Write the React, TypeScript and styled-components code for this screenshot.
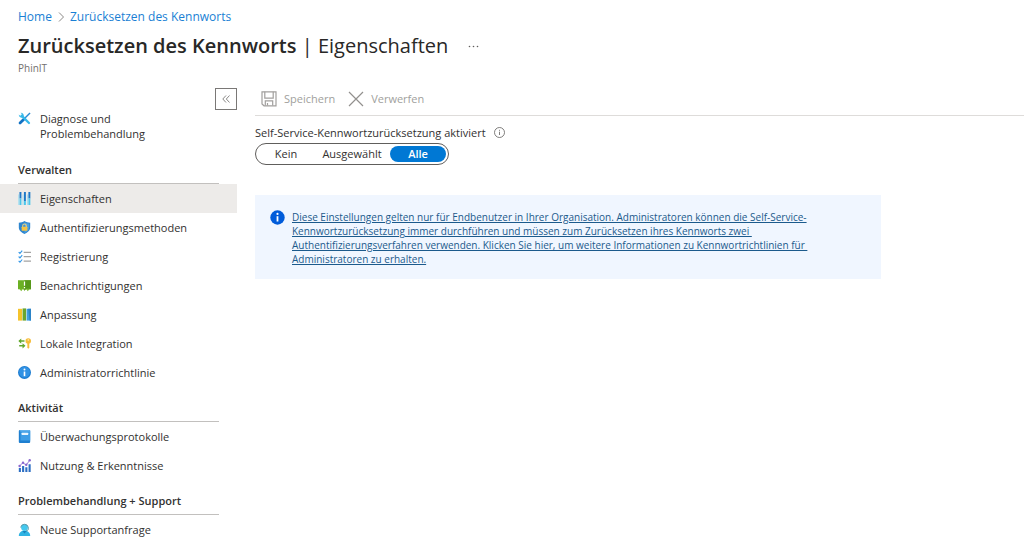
import React, { ReactNode, useState } from "react";
import styled, { createGlobalStyle } from "styled-components";

const GlobalStyle = createGlobalStyle`
  *, *::before, *::after { box-sizing: border-box; }
  body {
    margin: 0;
    background: #fff;
    color: #323130;
    font: 400 11px/15px "Open Sans", "Noto Sans", sans-serif;
  }
  ul { list-style: none; margin: 0; padding: 0; }
  button { font: inherit; background: none; border: 0; padding: 0; }
  svg { display: block; flex: none; }
`;

const Page = styled.div`
  min-height: 100vh;
  padding-top: 8px;
`;

const Header = styled.header`
  padding: 0 18px;
`;

const Breadcrumb = styled.nav`
  display: flex;
  align-items: center;
  gap: 5px;
  font-size: 12px;
  line-height: 17px;
`;

const CrumbLink = styled.a`
  color: #1a7fd4;
  text-decoration: none;
`;

const TitleRow = styled.div`
  display: flex;
  align-items: center;
  gap: 20px;
  margin-top: 7px;
`;

const Title = styled.h1`
  margin: 0;
  color: #292827;
  font-size: 20px;
  font-weight: 400;
  line-height: 28px;

  strong { font-weight: 600; }
`;

const MoreButton = styled.button`
  display: flex;
  padding: 4px 0;
`;

const Tenant = styled.div`
  margin-top: 1px;
  color: #72706e;
  font-size: 10px;
  line-height: 14px;
`;

const Columns = styled.div`
  display: flex;
  align-items: flex-start;
  padding-top: 13px;
`;

const Sidebar = styled.nav`
  flex: 0 0 237px;
`;

const SidebarTop = styled.div`
  display: flex;
  align-items: flex-start;
`;

const TopList = styled.ul`
  flex: 1;
  padding-top: 16px;
`;

const CollapseButton = styled.button`
  display: flex;
  align-items: center;
  justify-content: center;
  width: 22px;
  height: 22px;
  border: 1px solid #7a7876;
`;

const NavLink = styled.a<{ $active?: boolean }>`
  display: flex;
  gap: 9px;
  padding: 7px 0 7px 18px;
  background: ${(p) => (p.$active ? "#edebe9" : "transparent")};
  color: #323130;
  text-decoration: none;

  svg { margin-top: 1px; }
`;

const SectionTitle = styled.h2`
  margin: 0 18px 0 18px;
  padding: 13px 0 6px;
  border-bottom: 1px solid #c2c0be;
  font-size: 11px;
  font-weight: 600;
  line-height: 15px;

  ${SidebarTop} + & { padding-top: 14px; }
`;

const Main = styled.main`
  flex: 1;
  min-width: 0;
  padding-left: 18px;
`;

const Toolbar = styled.div`
  display: flex;
  gap: 13px;
  padding: 3px 6px 8px;
  border-bottom: 1px solid #dedcda;
`;

const ToolButton = styled.button`
  display: flex;
  align-items: center;
  gap: 7px;
  color: #a19f9d;
  line-height: 16px;
`;

const Field = styled.fieldset`
  margin: 0;
  padding: 9px 0 0;
  border: 0;
`;

const Legend = styled.legend`
  display: flex;
  align-items: center;
  gap: 8px;
  float: left;
  width: 100%;
  padding: 0;
  margin-bottom: 3px;
`;

const Segments = styled.div`
  display: inline-flex;
  clear: both;
  height: 22px;
  padding: 2px;
  border: 1px solid #605e5c;
  border-radius: 11px;
`;

const Segment = styled.label<{ $wide?: boolean }>`
  position: relative;
  display: flex;
  align-items: center;
  justify-content: center;
  width: ${(p) => (p.$wide ? "76px" : "56px")};
  border-radius: 8px;
  line-height: 14px;
  cursor: pointer;

  &:has(input:checked) {
    background: #0078d4;
    color: #fff;
    font-weight: 600;
  }
`;

const SegmentInput = styled.input`
  position: absolute;
  inset: 0;
  margin: 0;
  opacity: 0;
`;

const InfoBox = styled.section`
  display: flex;
  gap: 7px;
  max-width: 626px;
  margin-top: 30px;
  padding: 15px 16px 13px 15px;
  background: #f0f6ff;
`;

const InfoLink = styled.a`
  color: #1b5a8c;
  font-size: 10px;
  line-height: 14px;
  text-decoration: underline;
`;

const Icon = ({ children }: { children: ReactNode }) => (
  <svg width="13" height="13" viewBox="0 0 16 16" fill="none" aria-hidden="true">
    {children}
  </svg>
);

const ToolsIcon = () => (
  <Icon>
    <path d="M14.8 1.200 8 8" stroke="#2b8ad2" strokeWidth="1.800" />
    <path d="M7.500 8.500 2.500 13.500" stroke="#1272c4" strokeWidth="3.400" strokeLinecap="round" />
    <path d="m4.500 4.500 9 9" stroke="#35b8ea" strokeWidth="2.800" strokeLinecap="round" />
    <path d="M1 3.200 3 5.200 5.200 3 3.200 1A3.600 3.600 0 0 1 7 5.500L5.500 7A3.600 3.600 0 0 1 1 3.200Z" fill="#35b8ea" />
  </Icon>
);

const SlidersIcon = () => (
  <Icon>
    <path d="M3 0v8M8.500 0v11M14 0v8" stroke="#1f78c8" strokeWidth="2.400" />
    <path d="M3 8v8M8.500 11v5M14 8v8" stroke="#4cc6ea" strokeWidth="2.400" />
    <path d="M.8 3v13M6.200 3v13M11.700 3v13" stroke="#9bdcf2" strokeWidth="1" />
  </Icon>
);

const ShieldIcon = () => (
  <Icon>
    <path d="M8 0c2 1.500 4.500 2 7 2v6c0 4-4 6.500-7 8-3-1.500-7-4-7-8V2c2.500 0 5-.5 7-2Z" fill="#2f86cf" />
    <path d="M8 1.500C9.800 2.600 11.800 3 13.800 3.100V8c0 3.300-3.200 5.400-5.800 6.700Z" fill="#4ca0e0" />
    <path d="M5.800 7.500V6a2.200 2.200 0 0 1 4.400 0v1.500" stroke="#f3d67a" strokeWidth="1.300" />
    <rect x="4.500" y="7" width="7" height="5" rx=".6" fill="#f5c445" />
  </Icon>
);

const ChecklistIcon = () => (
  <Icon>
    <path d="m.8 2.500 1.600 1.600L5.200.8M.8 8l1.600 1.600 2.800-3.300M.8 13.400 2.400 15l2.800-3.300" stroke="#3a9be8" strokeWidth="1.400" />
    <path d="M7 2.800h9M7 8.200h9M7 13.600h9" stroke="#a3a3a3" strokeWidth="1.500" />
  </Icon>
);

const NoticeIcon = () => (
  <Icon>
    <path d="M0 1.500h16v11H9.500L8 14.500 6.500 12.500H0Z" fill="#6bb023" />
    <path d="M8 1.500h8v11H9.500L8 14.500Z" fill="#57981a" />
    <path d="M1.500 12h4.500L4 15Zm13 0h-4.500L12 15Z" fill="#7cbd30" />
    <path d="M8 3.200v5M8 9.700v1.800" stroke="#fff" strokeWidth="1.500" />
  </Icon>
);

const PaletteIcon = () => (
  <Icon>
    <path d="M0 1h5v14.500H0Z" fill="#f5c32c" />
    <path d="M5.600.5H10v15H5.600Z" fill="#6aa52f" />
    <path d="M10.600 1H16v14.500h-5.400Z" fill="#3f9fe0" />
    <path d="M12.500 1H16v14.500h-1.800Z" fill="#2b83c7" />
  </Icon>
);

const IntegrationIcon = () => (
  <Icon>
    <path d="M2 5h6M1.500 10.800H7" stroke="#62a82c" strokeWidth="1.800" />
    <path d="M4 1.800.4 5 4 8.200ZM5.600 7.600l3.600 3.200-3.600 3.200Z" fill="#62a82c" />
    <circle cx="12.600" cy="4.800" r="3.400" fill="#f6bd3a" />
    <path d="M11.500 7h2.400v6.200l-1.200 1.300-1.200-1.300Z" fill="#f6bd3a" />
    <circle cx="12.600" cy="3.700" r=".9" fill="#fff2c8" />
  </Icon>
);

const InfoIcon = () => (
  <Icon>
    <circle cx="8" cy="8" r="8" fill="#1c7cd0" />
    <circle cx="8" cy="7.500" r="6.700" fill="#3192e4" />
    <path d="M8 6.800V12.500" stroke="#fff" strokeWidth="2" />
    <circle cx="8" cy="4.300" r="1.200" fill="#fff" />
  </Icon>
);

const BookIcon = () => (
  <Icon>
    <rect x="1" y="0" width="14" height="16" rx="1.300" fill="#1f7fd0" />
    <path d="M3 0h11a1 1 0 0 1 1 1v12H3Z" fill="#3d9de6" />
    <rect x="4.500" y="3.500" width="8" height="2.800" rx=".5" fill="#e8f5ff" />
    <path d="M2 1h12.500" stroke="#7fc3f2" strokeWidth="1" />
  </Icon>
);

const InsightsIcon = () => (
  <Icon>
    <path d="M1 11h2.600v5H1ZM5 8.500h2.600V16H5ZM9 10h2.600v6H9ZM13 6.500h2.600V16H13Z" fill="#2d6fc4" />
    <path d="m2 8.500 4-4 4 3 4.500-6" stroke="#8a68cf" strokeWidth="1.100" />
    <circle cx="2" cy="8.500" r="1.500" fill="#8a68cf" />
    <circle cx="6.200" cy="4.600" r="1.500" fill="#8a68cf" />
    <circle cx="10.200" cy="7" r="1.500" fill="#8a68cf" />
    <circle cx="14.400" cy="1.600" r="1.500" fill="#8a68cf" />
  </Icon>
);

const SupportIcon = () => (
  <Icon>
    <path d="M1 16c0-4 2.500-6.500 7-6.500s7 2.500 7 6.500Z" fill="#2fb3e3" />
    <path d="m5.500 9.800 2.500 3 2.500-3Z" fill="#1a83bd" />
    <circle cx="8" cy="5.600" r="4.200" fill="#45c8ee" />
    <path d="M3.200 5.500a4.900 4.900 0 0 1 9.600 0v1.500c0 1.600-1 2.400-2.800 2.600" stroke="#4f8f9f" strokeWidth="1.100" />
  </Icon>
);

const SaveIcon = () => (
  <svg width="16" height="16" viewBox="0 0 16 16" fill="none" stroke="#a19f9d" strokeWidth="1.200" aria-hidden="true">
    <path d="M1 .8h14v14H3L1 13Z" />
    <path d="M3.800.8v6.400h8.400V.8M4.300 14.500v-4.700h7.400v4.700M6.500 12v2.500" />
  </svg>
);

const DiscardIcon = () => (
  <svg width="16" height="16" viewBox="0 0 16 16" fill="none" stroke="#92908e" strokeWidth="1.200" aria-hidden="true">
    <path d="m1 1 14 14M15 1 1 15" />
  </svg>
);

type Entry = { label: string; icon: ReactNode; active?: boolean };

const sections: { title: string; entries: Entry[] }[] = [
  {
    title: "Verwalten",
    entries: [
      { label: "Eigenschaften", icon: <SlidersIcon />, active: true },
      { label: "Authentifizierungsmethoden", icon: <ShieldIcon /> },
      { label: "Registrierung", icon: <ChecklistIcon /> },
      { label: "Benachrichtigungen", icon: <NoticeIcon /> },
      { label: "Anpassung", icon: <PaletteIcon /> },
      { label: "Lokale Integration", icon: <IntegrationIcon /> },
      { label: "Administratorrichtlinie", icon: <InfoIcon /> },
    ],
  },
  {
    title: "Aktivität",
    entries: [
      { label: "Überwachungsprotokolle", icon: <BookIcon /> },
      { label: "Nutzung & Erkenntnisse", icon: <InsightsIcon /> },
    ],
  },
  {
    title: "Problembehandlung + Support",
    entries: [{ label: "Neue Supportanfrage", icon: <SupportIcon /> }],
  },
];

const options = ["Kein", "Ausgewählt", "Alle"];

export default function App() {
  const [scope, setScope] = useState("Alle");

  return (
    <>
      <GlobalStyle />
      <Page>
        <Header>
          <Breadcrumb aria-label="Breadcrumb">
            <CrumbLink href="#home">Home</CrumbLink>
            <svg width="8" height="10" viewBox="0 0 8 10" fill="none" stroke="#8a8886" aria-hidden="true">
              <path d="m2 0.500 4.500 4.500L2 9.500" />
            </svg>
            <CrumbLink href="#reset">Zurücksetzen des Kennworts</CrumbLink>
          </Breadcrumb>
          <TitleRow>
            <Title>
              <strong>Zurücksetzen des Kennworts</strong> | Eigenschaften
            </Title>
            <MoreButton aria-label="Mehr">
              <svg width="11" height="3" viewBox="0 0 11 3" fill="#605e5c" aria-hidden="true">
                <circle cx="1.500" cy="1.500" r=".8" />
                <circle cx="5.500" cy="1.500" r=".8" />
                <circle cx="9.500" cy="1.500" r=".8" />
              </svg>
            </MoreButton>
          </TitleRow>
          <Tenant>PhinIT</Tenant>
        </Header>

        <Columns>
          <Sidebar aria-label="Menü">
            <SidebarTop>
              <TopList>
                <li>
                  <NavLink href="#diagnose">
                    <ToolsIcon />
                    <span>
                      Diagnose und
                      <br />
                      Problembehandlung
                    </span>
                  </NavLink>
                </li>
              </TopList>
              <CollapseButton aria-label="Menü einklappen">
                <svg width="8" height="8" viewBox="0 0 8 8" fill="none" stroke="#8a8886" aria-hidden="true">
                  <path d="M4 .5.8 4 4 7.500M7.500.5 4.300 4l3.200 3.500" />
                </svg>
              </CollapseButton>
            </SidebarTop>
            {sections.map((section) => (
              <React.Fragment key={section.title}>
                <SectionTitle>{section.title}</SectionTitle>
                <ul>
                  {section.entries.map((entry) => (
                    <li key={entry.label}>
                      <NavLink href="#" $active={entry.active} aria-current={entry.active ? "page" : undefined}>
                        {entry.icon}
                        {entry.label}
                      </NavLink>
                    </li>
                  ))}
                </ul>
              </React.Fragment>
            ))}
          </Sidebar>

          <Main>
            <Toolbar>
              <ToolButton disabled>
                <SaveIcon />
                Speichern
              </ToolButton>
              <ToolButton disabled>
                <DiscardIcon />
                Verwerfen
              </ToolButton>
            </Toolbar>

            <Field>
              <Legend>
                Self-Service-Kennwortzurücksetzung aktiviert
                <svg width="11" height="11" viewBox="0 0 11 11" fill="none" stroke="#605e5c" aria-hidden="true">
                  <circle cx="5.500" cy="5.500" r="5" strokeWidth=".8" />
                  <path d="M5.500 4.700v3.300M5.500 2.800v1" strokeWidth=".8" />
                </svg>
              </Legend>
              <Segments>
                {options.map((option) => (
                  <Segment key={option} $wide={option === "Ausgewählt"}>
                    <SegmentInput
                      type="radio"
                      name="scope"
                      value={option}
                      checked={scope === option}
                      onChange={() => setScope(option)}
                    />
                    {option}
                  </Segment>
                ))}
              </Segments>
            </Field>

            <InfoBox>
              <svg width="15" height="15" viewBox="0 0 15 15" aria-hidden="true">
                <circle cx="7.500" cy="7.500" r="7.200" fill="#015cda" />
                <path d="M7.500 6.200v5.300" stroke="#fff" strokeWidth="1.800" />
                <circle cx="7.500" cy="3.900" r="1.100" fill="#fff" />
              </svg>
              <InfoLink href="#richtlinien">
                Diese Einstellungen gelten nur für Endbenutzer in Ihrer Organisation. Administratoren können die Self-Service-
                <br />
                Kennwortzurücksetzung immer durchführen und müssen zum Zurücksetzen ihres Kennworts zwei&nbsp;
                <br />
                Authentifizierungsverfahren verwenden. Klicken Sie hier, um weitere Informationen zu Kennwortrichtlinien für&nbsp;
                <br />
                Administratoren zu erhalten.
              </InfoLink>
            </InfoBox>
          </Main>
        </Columns>
      </Page>
    </>
  );
}
